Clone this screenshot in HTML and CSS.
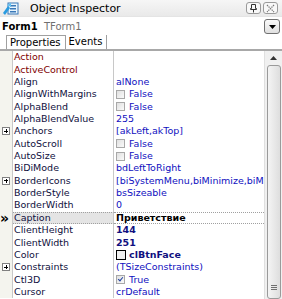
FILE: index.html
```html
<!DOCTYPE html>
<html lang="en">
<head>
  <meta charset="UTF-8" />
  <title>Object Inspector</title>
  <link rel="stylesheet" href="styles.css">
</head>
<body>
  <div class="inspector">
    <!-- Title bar -->
    <div class="titlebar">
      <svg class="app-icon" width="16" height="13" viewBox="0 0 16 13">
        <rect x="5" y="1" width="10" height="11" fill="#e8f4fc" stroke="#3a78b8"/>
        <rect x="7" y="3" width="6" height="1.5" fill="#3a78b8"/>
        <rect x="7" y="6" width="6" height="1.5" fill="#3a78b8"/>
        <rect x="7" y="9" width="6" height="1.5" fill="#3a78b8"/>
        <path d="M0 11 L5 4 L7 6 L2 13 Z" fill="#2a9be0"/>
        <path d="M4 3 L8 1 L8 5 Z" fill="#60c0f0"/>
      </svg>
      <span class="title">Object Inspector</span>
      <div class="title-buttons">
        <span class="tbtn">
          <svg width="9" height="9" viewBox="0 0 9 9"><path d="M2.5 0.5h4v4h1v1h-6v-1h1z M4.5 5.5v3" fill="none" stroke="#333"/></svg>
        </span>
        <span class="tbtn">
          <svg width="9" height="9" viewBox="0 0 9 9"><path d="M1 1l7 7M8 1l-7 7" stroke="#777" stroke-width="1.2" stroke-dasharray="1.4 0.8"/></svg>
        </span>
      </div>
    </div>

    <!-- Component selector -->
    <div class="combo">
      <span class="comp-name">Form1</span>
      <span class="comp-type">TForm1</span>
      <span class="drop">
        <svg width="7" height="4" viewBox="0 0 7 4"><path d="M0 0h7l-3.5 4z" fill="#000"/></svg>
      </span>
    </div>

    <!-- Tabs -->
    <div class="tabs">
      <span class="tab active">Properties</span>
      <span class="tab">Events</span>
    </div>

    <!-- Property grid -->
    <div class="grid">
      <div class="rows">
        <div class="row"><span class="gut"></span><span class="name link">Action</span><span class="val"></span></div>
        <div class="row"><span class="gut"></span><span class="name link">ActiveControl</span><span class="val"></span></div>
        <div class="row"><span class="gut"></span><span class="name">Align</span><span class="val">alNone</span></div>
        <div class="row"><span class="gut"></span><span class="name">AlignWithMargins</span><span class="val"><i class="chk"></i>False</span></div>
        <div class="row"><span class="gut"></span><span class="name">AlphaBlend</span><span class="val"><i class="chk"></i>False</span></div>
        <div class="row"><span class="gut"></span><span class="name">AlphaBlendValue</span><span class="val">255</span></div>
        <div class="row"><span class="gut"><i class="plus"></i></span><span class="name">Anchors</span><span class="val">[akLeft,akTop]</span></div>
        <div class="row"><span class="gut"></span><span class="name">AutoScroll</span><span class="val"><i class="chk"></i>False</span></div>
        <div class="row"><span class="gut"></span><span class="name">AutoSize</span><span class="val"><i class="chk"></i>False</span></div>
        <div class="row"><span class="gut"></span><span class="name">BiDiMode</span><span class="val">bdLeftToRight</span></div>
        <div class="row"><span class="gut"><i class="plus"></i></span><span class="name">BorderIcons</span><span class="val">[biSystemMenu,biMinimize,biMaximize]</span></div>
        <div class="row"><span class="gut"></span><span class="name">BorderStyle</span><span class="val">bsSizeable</span></div>
        <div class="row"><span class="gut"></span><span class="name">BorderWidth</span><span class="val">0</span></div>
        <div class="row selected"><span class="gut sel">&raquo;</span><span class="name">Caption</span><span class="val strong">Приветствие</span></div>
        <div class="row"><span class="gut"></span><span class="name">ClientHeight</span><span class="val bold">144</span></div>
        <div class="row"><span class="gut"></span><span class="name">ClientWidth</span><span class="val bold">251</span></div>
        <div class="row"><span class="gut"></span><span class="name">Color</span><span class="val bold"><i class="swatch"></i>clBtnFace</span></div>
        <div class="row"><span class="gut"><i class="plus"></i></span><span class="name">Constraints</span><span class="val">(TSizeConstraints)</span></div>
        <div class="row"><span class="gut"></span><span class="name">Ctl3D</span><span class="val"><i class="chk on"></i>True</span></div>
        <div class="row"><span class="gut"></span><span class="name">Cursor</span><span class="val">crDefault</span></div>
      </div>
      <div class="scrollbar">
        <span class="arrow">
          <svg width="7" height="4" viewBox="0 0 7 4"><path d="M0 4h7l-3.5-4z" fill="#333"/></svg>
        </span>
        <span class="thumb"><i class="grip"></i></span>
      </div>
    </div>
  </div>
</body>
</html>
```

FILE: styles.css
```css
/* Base */
body {
  margin: 0;
  background: #fff;
  font-family: 'DejaVu Sans', Verdana, sans-serif;
  font-size: 9.5px;
  color: #000;
  overflow: hidden;
}
*, *::before, *::after {
  box-sizing: border-box;
}

.inspector {
  width: 282px;
  height: 299px;
  display: flex;
  flex-direction: column;
  background: #fff;
}

/* Title bar */
.titlebar {
  height: 17px;
  display: flex;
  align-items: center;
  padding: 0 4px 0 3px;
  background: linear-gradient(#f6f6f6, #e9e9e9);
  border-bottom: 1px solid #e4e4e4;
}
.app-icon {
  margin-right: 11px;
}
.title {
  font-family: 'DejaVu Sans', sans-serif;
  font-size: 11px;
  color: #000;
}
.title-buttons {
  margin-left: auto;
  display: flex;
  gap: 2px;
}
.tbtn {
  width: 15px;
  height: 12px;
  border: 1px solid #9a9a9a;
  border-radius: 3px;
  background: #f8f8f8;
  display: flex;
  align-items: center;
  justify-content: center;
}

/* Component combo */
.combo {
  height: 19px;
  display: flex;
  align-items: center;
  padding: 0 2px 0 2px;
  background: #fff;
}
.comp-name {
  font-weight: bold;
  font-size: 10px;
  width: 42px;
}
.comp-type {
  color: #707070;
  font-size: 10px;
}
.drop {
  margin-left: auto;
  width: 16px;
  height: 15px;
  border: 1px solid #707070;
  border-radius: 3px;
  background: linear-gradient(#fafafa, #e0e0e0);
  display: flex;
  align-items: center;
  justify-content: center;
}

/* Tabs */
.tabs {
  height: 15px;
  display: flex;
  align-items: flex-end;
  padding-left: 6px;
  border-bottom: 2px solid #a8a8a8;
}
.tab {
  height: 14px;
  padding: 0 4px 0 3px;
  font-size: 10px;
  line-height: 13px;
  border-right: 1px solid #a0a0a0;
}
.tab.active {
  border: 1px solid #a0a0a0;
  border-bottom: none;
  background: #fff;
}

/* Property grid */
.grid {
  flex: 1;
  display: flex;
  min-height: 0;
}
.rows {
  flex: 1;
  display: flex;
  flex-direction: column;
  overflow: hidden;
}
.row {
  height: 12.37px;
  flex: none;
  display: flex;
  align-items: center;
  line-height: 12px;
}
.gut {
  width: 13px;
  height: 100%;
  flex: none;
  display: flex;
  align-items: center;
  justify-content: center;
  background: #f4f4ee;
  border-right: 1px solid #c8c8c8;
}
.gut.sel {
  font-size: 14px;
  font-weight: bold;
  justify-content: flex-start;
  padding-left: 0;
  line-height: 10px;
}
.plus {
  width: 8px;
  height: 8px;
  border: 1px solid #808080;
  background: #fff;
  position: relative;
}
.plus::before, .plus::after {
  content: '';
  position: absolute;
  background: #000;
}
.plus::before {
  left: 1px; top: 2.5px; width: 4px; height: 1px;
}
.plus::after {
  left: 2.5px; top: 1px; width: 1px; height: 4px;
}
.name {
  width: 101px;
  height: 100%;
  flex: none;
  padding-left: 1px;
  color: #101040;
  white-space: nowrap;
  overflow: hidden;
  border-right: 1px solid #c8c8c8;
  display: flex;
  align-items: center;
}
.name.link {
  color: #800000;
}
.val {
  flex: 1;
  height: 100%;
  padding-left: 2px;
  color: #1010c0;
  white-space: nowrap;
  overflow: hidden;
  display: flex;
  align-items: center;
}
.val.bold {
  font-weight: bold;
  color: #101080;
}
.val.strong {
  font-weight: bold;
  color: #000;
}
.row.selected .name,
.row.selected .val {
  background: #e4e4e4;
  border-top: 1px dotted #a0a0a0;
  border-bottom: 1px dotted #a0a0a0;
}
.row.selected .val {
  background: #fff;
}
.chk {
  width: 9px;
  height: 9px;
  border: 1px solid #a8a8a8;
  background: linear-gradient(135deg, #e0e0e0, #fafafa);
  margin-right: 4px;
  flex: none;
  position: relative;
}
.chk.on::after {
  content: '';
  position: absolute;
  left: 2px;
  top: 0;
  width: 3px;
  height: 5px;
  border: solid #2040a0;
  border-width: 0 1.5px 1.5px 0;
  transform: rotate(40deg);
}
.swatch {
  width: 10px;
  height: 10px;
  border: 1px solid #000;
  background: #f0f0f0;
  margin-right: 3px;
  flex: none;
}

/* Scrollbar */
.scrollbar {
  width: 18px;
  flex: none;
  display: flex;
  flex-direction: column;
  align-items: center;
  padding: 1px 2px 0 2px;
  background: #f0f0f0;
  border-left: 1px solid #e0e0e0;
}
.arrow {
  width: 14px;
  height: 11px;
  display: flex;
  align-items: center;
  justify-content: center;
}
.thumb {
  flex: 1;
  width: 14px;
  margin-top: 2px;
  border: 1px solid #9a9a9a;
  border-radius: 3px;
  background: linear-gradient(90deg, #f4f4f4, #dedede);
  display: flex;
  align-items: flex-end;
  justify-content: center;
  padding-bottom: 8px;
}
.grip {
  width: 6px;
  height: 5px;
  border-top: 1px solid #707070;
  border-bottom: 1px solid #707070;
  position: relative;
}
.grip::after {
  content: '';
  position: absolute;
  left: 0; right: 0; top: 1px;
  border-top: 1px solid #707070;
}
```
